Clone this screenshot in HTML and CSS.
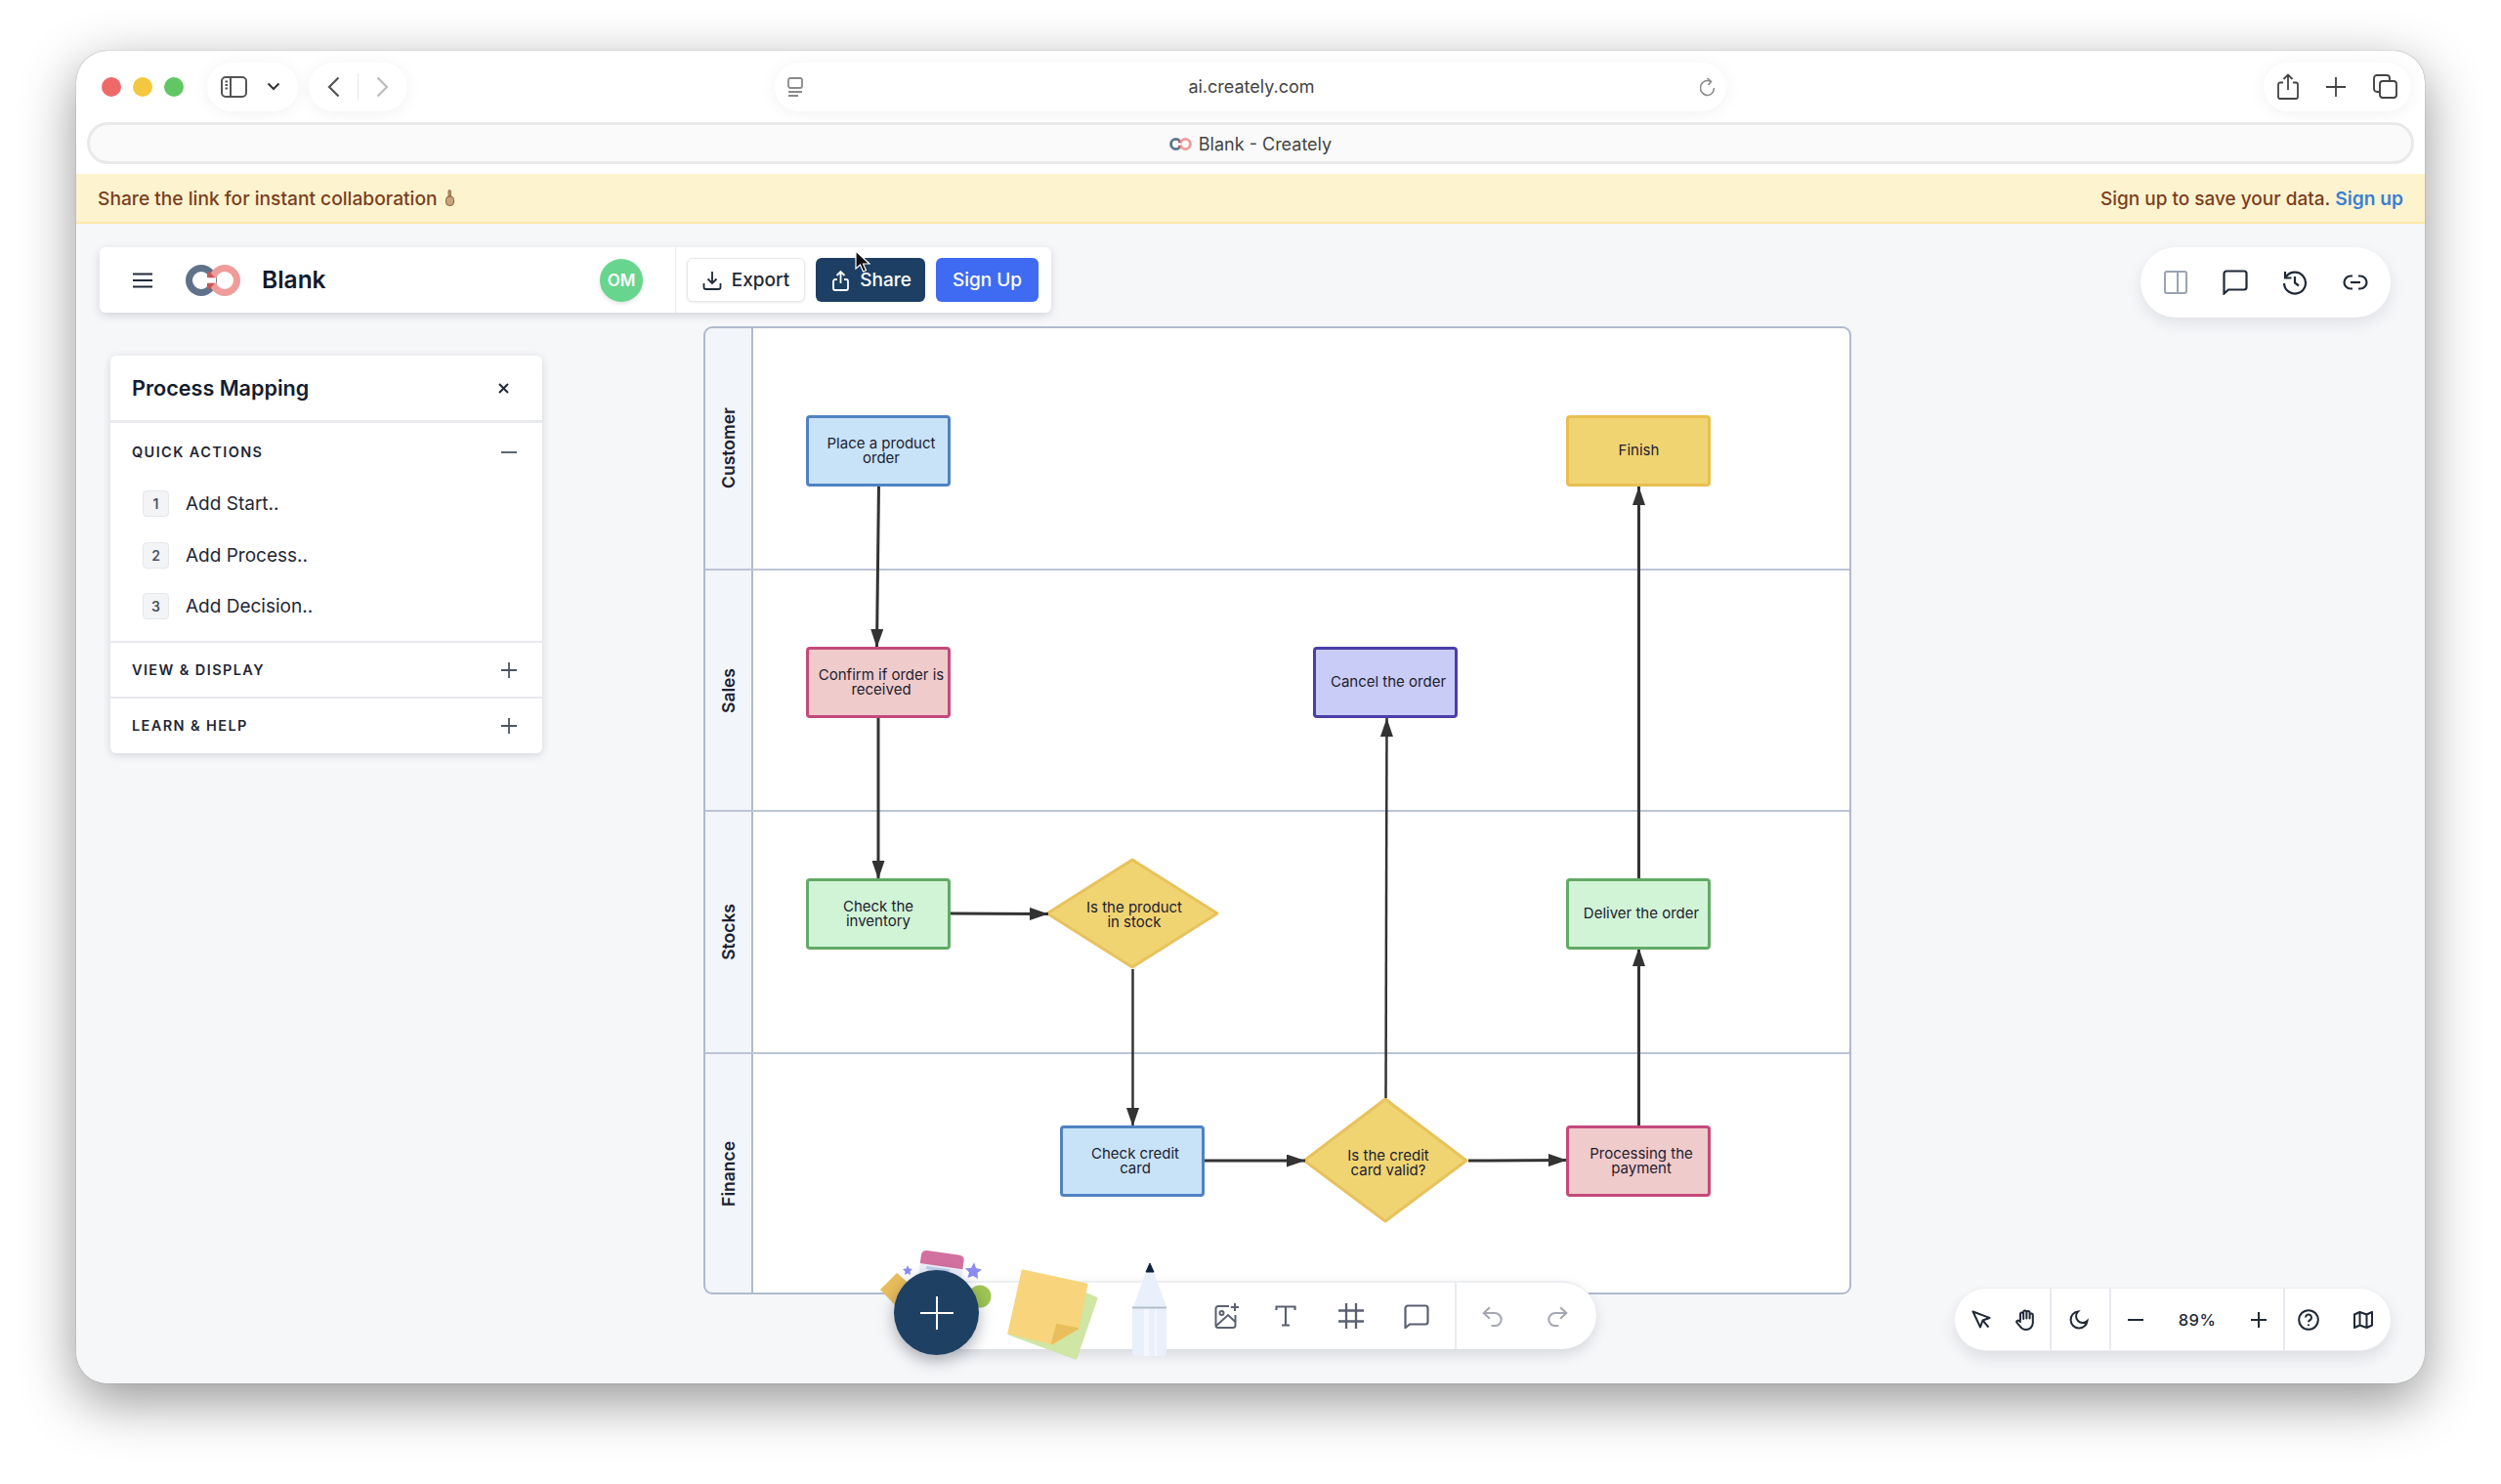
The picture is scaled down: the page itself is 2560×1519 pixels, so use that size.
FILE: index.html
```html
<!DOCTYPE html>
<html lang="en">
  <head>
    <meta charset="UTF-8" />
    <meta name="viewport" content="width=device-width, initial-scale=1.0" />
    <title>Blank - Creately</title>
    <link rel="stylesheet" href="styles.css">
  </head>
  <body>
    <svg class="defs" width="0" height="0">
      <symbol id="logo" viewBox="0 0 56 32">
        <circle cx="16" cy="16" r="12.5" fill="none" stroke="#5f7289" stroke-width="7" />
        <circle cx="40" cy="16" r="12.5" fill="none" stroke="#ef9c9a" stroke-width="7" />
        <path d="M22 6.5a12.5 12.5 0 0 1 6 4.5l2 2.5h-8z M22 25.5a12.5 12.5 0 0 0 6-4.5l2-2.5h-8z" fill="#c9565b" />
        <rect x="21" y="13.4" width="10" height="5.2" fill="#fff" />
      </symbol>
      <marker id="head" markerWidth="19" markerHeight="13" refX="19" refY="6.5" orient="auto" markerUnits="userSpaceOnUse">
        <path d="M0 0L19 6.5L0 13z" fill="#333" />
      </marker>
    </svg>

    <div class="window">
      <div class="browser-bar">
        <div class="lights">
          <span class="light red"></span>
          <span class="light yellow"></span>
          <span class="light green"></span>
        </div>
        <div class="pill side-pill">
          <svg width="27" height="22" viewBox="0 0 27 22" fill="none" stroke="#555" stroke-width="2"><rect x="1" y="1" width="25" height="20" rx="4" /><path d="M10 1v20" /><path d="M4.5 5.5h2.5M4.5 9h2.5M4.5 12.5h2.5" stroke-width="1.8" /></svg>
          <svg width="14" height="9" viewBox="0 0 14 9" fill="none" stroke="#333" stroke-width="2"><path d="M1.5 1.5L7 7l5.5-5.5" /></svg>
        </div>
        <div class="pill nav-pill">
          <svg width="13" height="22" viewBox="0 0 13 22" fill="none" stroke="#555" stroke-width="2.2"><path d="M11.5 1.5L2 11l9.5 9.5" /></svg>
          <span class="nav-sep"></span>
          <svg width="13" height="22" viewBox="0 0 13 22" fill="none" stroke="#bbb" stroke-width="2.2"><path d="M1.5 1.5L11 11l-9.5 9.5" /></svg>
        </div>
        <div class="pill address">
          <svg width="16" height="20" viewBox="0 0 16 20" fill="none" stroke="#8a8a8a" stroke-width="1.8"><rect x="1" y="1" width="14" height="10" rx="2" /><path d="M1 15h14M1 19h10" /></svg>
          <span class="address-text">ai.creately.com</span>
          <svg width="16" height="20" viewBox="0 0 16 20" fill="none" stroke="#8a8a8a" stroke-width="1.6"><path d="M11 4.5A7 7.5 0 1 0 14.5 11" /><path d="M7.5 1l4 3.5-3 3.5" /></svg>
        </div>
        <div class="pill share-pill">
          <svg width="22" height="27" viewBox="0 0 22 27" fill="none" stroke="#444" stroke-width="1.8"><path d="M6 9.5H3a2 2 0 0 0-2 2V24a2 2 0 0 0 2 2h16a2 2 0 0 0 2-2V11.5a2 2 0 0 0-2-2h-3" /><path d="M11 17V1.5M6.5 6L11 1.5 15.5 6" /></svg>
          <svg width="20" height="20" viewBox="0 0 20 20" fill="none" stroke="#444" stroke-width="1.8"><path d="M10 0v20M0 10h20" /></svg>
          <svg width="25" height="25" viewBox="0 0 25 25" fill="none" stroke="#444" stroke-width="1.9"><rect x="7" y="7" width="17" height="17" rx="3" /><path d="M7 18H4a3 3 0 0 1-3-3V4a3 3 0 0 1 3-3h10a3 3 0 0 1 3 3v3" /></svg>
        </div>
      </div>

      <div class="tab-bar">
        <svg class="tab-logo" width="23" height="13"><use href="#logo" /></svg>
        <span>Blank - Creately</span>
      </div>

      <div class="banner">
        <span class="banner-left">
          Share the link for instant collaboration
          <svg width="11" height="18" viewBox="0 0 11 18" fill="#c9a27e" stroke="#7a4a26" stroke-width="0.8"><path d="M4 7V1.8a1.2 1.2 0 0 1 2.4 0V7" /><rect x="1.5" y="7" width="8" height="9.5" rx="3.5" /></svg>
        </span>
        <span>Sign up to save your data. <a class="banner-link">Sign up</a></span>
      </div>

      <div class="canvas">
        <!-- swimlane diagram -->
        <div class="diagram">
          <div class="lane"><div class="lane-head"><span>Customer</span></div></div>
          <div class="lane"><div class="lane-head"><span>Sales</span></div></div>
          <div class="lane"><div class="lane-head"><span>Stocks</span></div></div>
          <div class="lane"><div class="lane-head"><span>Finance</span></div></div>

          <svg class="links" width="1173" height="989" fill="none" stroke="#333" stroke-width="3">
            <polygon class="decision" points="438,545 525,600 438,655 351,600" />
            <polygon class="decision" points="697,790 780,853 697,915 614,853" />
            <path d="M178.5 162L176.5 328" marker-end="url(#head)" />
            <path d="M178 399V565" marker-end="url(#head)" />
            <path d="M252 600L352 600.5" marker-end="url(#head)" />
            <path d="M438.5 657V818" marker-end="url(#head)" stroke-width="2.5" />
            <path d="M512 853L615 853" marker-end="url(#head)" />
            <path d="M782 853L883 852.5" marker-end="url(#head)" />
            <path d="M697.5 789L698.5 400" marker-end="url(#head)" stroke-width="2.5" />
            <path d="M956.5 817V635" marker-end="url(#head)" />
            <path d="M956.5 564V163" marker-end="url(#head)" />
          </svg>

          <div class="node blue node-place">Place a product<br />order</div>
          <div class="node pink node-confirm">Confirm if order is<br />received</div>
          <div class="node green node-inventory">Check the<br />inventory</div>
          <div class="node purple node-cancel">Cancel the order</div>
          <div class="node gold node-finish">Finish</div>
          <div class="node green node-deliver">Deliver the order</div>
          <div class="node pink node-payment">Processing the<br />payment</div>
          <div class="node blue node-credit">Check credit<br />card</div>
          <div class="node-text text-stock">Is the product<br />in stock</div>
          <div class="node-text text-valid">Is the credit<br />card valid?</div>
        </div>

        <!-- top left bar -->
        <div class="top-bar">
          <div class="doc-info">
            <svg class="menu-icon" width="20" height="16" viewBox="0 0 20 16" stroke="#1f2937" stroke-width="2.2"><path d="M0 1.5h20M0 8h20M0 14.5h20" /></svg>
            <svg class="doc-logo" width="56" height="32"><use href="#logo" /></svg>
            <span class="doc-name">Blank</span>
            <span class="avatar">OM</span>
          </div>
          <div class="doc-actions">
            <button class="btn btn-export">
              <svg width="20" height="20" viewBox="0 0 20 20" fill="none" stroke="#1f2937" stroke-width="1.8"><path d="M10 1v12M5.5 8.5L10 13l4.5-4.5" /><path d="M1.5 13v4a2 2 0 0 0 2 2h13a2 2 0 0 0 2-2v-4" /></svg>
              Export
            </button>
            <button class="btn btn-share">
              <svg width="17" height="22" viewBox="0 0 17 22" fill="none" stroke="#fff" stroke-width="1.8"><path d="M8.5 14V2M4.5 6l4-4 4 4" /><path d="M5 10H3a2 2 0 0 0-2 2v7a2 2 0 0 0 2 2h11a2 2 0 0 0 2-2v-7a2 2 0 0 0-2-2h-2" /></svg>
              Share
            </button>
            <button class="btn btn-signup">Sign Up</button>
          </div>
        </div>

        <!-- process panel -->
        <div class="side-panel">
          <div class="panel-head">
            <span class="panel-title">Process Mapping</span>
            <svg width="11" height="11" viewBox="0 0 11 11" stroke="#1f2937" stroke-width="2"><path d="M1 1l9 9M10 1l-9 9" /></svg>
          </div>
          <div class="panel-section open">
            <div class="section-head">
              <span>QUICK ACTIONS</span>
              <svg width="16" height="16" viewBox="0 0 16 16" stroke="#4b5563" stroke-width="1.8"><path d="M0 8h16" /></svg>
            </div>
            <div class="action"><span class="key">1</span>Add Start..</div>
            <div class="action"><span class="key">2</span>Add Process..</div>
            <div class="action"><span class="key">3</span>Add Decision..</div>
          </div>
          <div class="panel-section">
            <div class="section-head">
              <span>VIEW &amp; DISPLAY</span>
              <svg width="16" height="16" viewBox="0 0 16 16" stroke="#4b5563" stroke-width="1.8"><path d="M0 8h16M8 0v16" /></svg>
            </div>
          </div>
          <div class="panel-section">
            <div class="section-head">
              <span>LEARN &amp; HELP</span>
              <svg width="16" height="16" viewBox="0 0 16 16" stroke="#4b5563" stroke-width="1.8"><path d="M0 8h16M8 0v16" /></svg>
            </div>
          </div>
        </div>

        <!-- top right tools -->
        <div class="right-tools">
          <svg width="24" height="24" viewBox="0 0 24 24" fill="none" stroke="#9aa3b2" stroke-width="2"><rect x="1" y="1" width="22" height="22" rx="2" /><path d="M14 1v22" /></svg>
          <svg width="26" height="26" viewBox="0 0 26 26" fill="none" stroke="#1f2937" stroke-width="2.2"><path d="M4 1.5h18a2.5 2.5 0 0 1 2.5 2.5v14a2.5 2.5 0 0 1-2.5 2.5H6L1.5 24.5V4A2.5 2.5 0 0 1 4 1.5z" /></svg>
          <svg width="26" height="26" viewBox="0 0 26 26" fill="none" stroke="#1f2937" stroke-width="2.2"><path d="M3.5 8a11 11 0 1 1-1.5 6" /><path d="M3 2v6.5h6.5" /><path d="M13 7v6.5l4 3" /></svg>
          <svg width="26" height="16" viewBox="0 0 26 16" fill="none" stroke="#1f2937" stroke-width="2.2"><path d="M10 1.5H8a6.5 6.5 0 0 0 0 13h2M16 1.5h2a6.5 6.5 0 0 1 0 13h-2" /><path d="M8 8h10" /></svg>
        </div>

        <!-- bottom creation bar -->
        <div class="create-bar">
          <div class="create-tools">
            <svg width="26" height="26" viewBox="0 0 26 26" fill="none" stroke="#5b6170" stroke-width="2"><path d="M15 3H4a2.5 2.5 0 0 0-2.5 2.5v17A2.5 2.5 0 0 0 4 25h15a2.5 2.5 0 0 0 2.5-2.5V12" /><circle cx="7.5" cy="10" r="2" /><path d="M2 23l12-11 7.5 7" /><path d="M21 0v8M17 4h8" /></svg>
            <svg class="tool-text" width="22" height="22" viewBox="0 0 22 22" fill="none" stroke="#5b6170" stroke-width="2.2"><path d="M1.5 5V1.5h19V5M11 1.5v19M7 20.5h8" /></svg>
            <svg width="26" height="26" viewBox="0 0 26 26" fill="none" stroke="#5b6170" stroke-width="2.3"><path d="M8 0v26M18 0v26M0 7.5h26M0 18.5h26" /></svg>
            <svg width="26" height="25" viewBox="0 0 26 25" fill="none" stroke="#5b6170" stroke-width="2.2"><path d="M4 1.5h18a2.5 2.5 0 0 1 2.5 2.5v14a2.5 2.5 0 0 1-2.5 2.5H6L1.5 24V4A2.5 2.5 0 0 1 4 1.5z" /></svg>
          </div>
          <div class="history-tools">
            <svg width="21" height="21" viewBox="0 0 24 24" fill="none" stroke="#a4a8b1" stroke-width="2.4"><path d="M9 1.5L2 8l7 6.5" /><path d="M2 8h13a7.5 7.5 0 0 1 0 15h-4" /></svg>
            <svg width="21" height="21" viewBox="0 0 24 24" fill="none" stroke="#a4a8b1" stroke-width="2.4"><path d="M15 1.5L22 8l-7 6.5" /><path d="M22 8H9a7.5 7.5 0 0 0 0 15h4" /></svg>
          </div>
        </div>
        <svg class="create-art" width="320" height="130" viewBox="0 0 320 130">
          <polygon points="11,50 28,33 50,52 30,70" fill="#e8bd5c" />
          <g transform="rotate(8 72 30)">
            <rect x="51" y="12" width="44" height="40" rx="4" fill="#eef0fb" />
            <rect x="58" y="28" width="24" height="3" fill="#bcd0ee" />
            <path d="M51 26V17a5 5 0 0 1 5-5h34a5 5 0 0 1 5 5v9z" fill="#d2709f" />
          </g>
          <polygon points="39,25 40.5,28.5 44,29 41.5,31.5 42,35 39,33.3 36,35 36.5,31.5 34,29 37.5,28.5" fill="#8a8cf0" />
          <polygon points="107,22 109,28 115,29.5 110.5,33 111,39 106,36 100.5,38 102,32.5 98,28 104,28" fill="#8a8cf0" />
          <circle cx="113" cy="57" r="11.5" fill="#a0c555" />
          <polygon points="223,55 232,59 211,120 143,95" fill="#cfe6a4" stroke="#cfe6a4" stroke-width="3" stroke-linejoin="round" />
          <polygon points="157,31 222,45 213,88 188,105 143,94" fill="#f8d47c" stroke="#f8d47c" stroke-width="3" stroke-linejoin="round" />
          <polygon points="187,105 192,86 213,90" fill="#e8bf5c" stroke="#e8bf5c" stroke-width="2" stroke-linejoin="round" />
          <path d="M283 32h8l13 36H270z" fill="#e9f0fb" />
          <path d="M283 32h8l-4-9z" fill="#0f2340" stroke="#0f2340" stroke-linejoin="round" />
          <path d="M269 68h35v46a4 4 0 0 1-4 4h-27a4 4 0 0 1-4-4z" fill="#e9f0fb" />
          <path d="M281 69h5v49h-5zM292 69h2v49h-2z" fill="#f4f7fd" />
          <path d="M269 68.5h35" stroke="#b3bdcb" stroke-width="2" />
        </svg>
        <button class="add-btn">
          <svg width="34" height="34" viewBox="0 0 34 34" stroke="#fff" stroke-width="2"><path d="M17 0v34M0 17h34" /></svg>
        </button>

        <!-- bottom right zoom bar -->
        <div class="zoom-bar">
          <div class="zoom-group group-pointer">
            <svg width="20" height="20" viewBox="0 0 20 20" fill="none" stroke="#1f2937" stroke-width="2" stroke-linejoin="round"><path d="M1.5 1.5l17 6.5-7 2.5-2.5 7zM11.5 10.5l6 7" /></svg>
            <svg width="22" height="22" viewBox="0 0 22 22" fill="none" stroke="#1f2937" stroke-width="2" stroke-linecap="round"><path d="M5 11V5a1.6 1.6 0 0 1 3.2 0v5M8.2 9.5V3a1.6 1.6 0 0 1 3.2 0v6.5M11.4 9.5V3.5a1.6 1.6 0 0 1 3.2 0v6M14.6 9.5V6a1.6 1.6 0 0 1 3.2 0v8c0 4-3 7-7 7-3.5 0-5-1.5-6.500-4L1.500 14c-1-1.500.8-3 2.300-2l1.200 1" /></svg>
          </div>
          <div class="zoom-group group-theme">
            <svg width="20" height="20" viewBox="0 0 20 20" fill="none" stroke="#1f2937" stroke-width="2"><path d="M9 1.5A8.5 8.5 0 1 0 18.5 11 6.5 6.5 0 0 1 9 1.5z" /></svg>
          </div>
          <div class="zoom-group group-zoom">
            <svg width="16" height="16" viewBox="0 0 16 16" stroke="#1f2937" stroke-width="2"><path d="M0 8h16" /></svg>
            <span class="zoom-value">89%</span>
            <svg width="16" height="16" viewBox="0 0 16 16" stroke="#1f2937" stroke-width="2"><path d="M0 8h16M8 0v16" /></svg>
          </div>
          <div class="zoom-group group-help">
            <svg width="22" height="22" viewBox="0 0 22 22" fill="none" stroke="#1f2937" stroke-width="2"><circle cx="11" cy="11" r="9.8" /><path d="M8 8.5a3 3 0 1 1 4.5 2.6c-1 .6-1.5 1.100-1.5 2.200" /><path d="M11 15.500v1.500" /></svg>
            <svg width="20" height="18" viewBox="0 0 20 18" fill="none" stroke="#1f2937" stroke-width="2" stroke-linejoin="round"><path d="M1 3.5l5.5-2.5 7 2.500L19 1v13.500L13.500 17l-7-2.500L1 17zM6.500 1v13.500M13.500 3.500V17" /></svg>
          </div>
        </div>

        <!-- mouse pointer from the capture -->
        <svg class="pointer" width="16" height="24" viewBox="0 0 16 24"><path d="M1 1v18l4.5-4 3 7 3-1.300-3-6.700H15z" fill="#111" stroke="#fff" stroke-width="1.2" /></svg>
      </div>
    </div>
  </body>
</html>
```

FILE: styles.css
```css
html,
body {
  margin: 0;
  height: 100%;
  overflow: hidden;
  background: #fff;
}

body {
  padding: 52px 78px 0;
  box-sizing: border-box;
  font-family: Inter, "Liberation Sans", sans-serif;
  color: #1f2937;
}

.defs {
  position: absolute;
}

.window {
  position: relative;
  width: 2404px;
  height: 1364px;
  display: flex;
  flex-direction: column;
  border-radius: 32px;
  background: #fff;
  box-shadow: 0 0 1px rgba(0, 0, 0, 0.5), 0 18px 56px rgba(0, 0, 0, 0.42);
}

/* Browser chrome */
.browser-bar {
  display: flex;
  align-items: center;
  height: 73px;
  padding: 0 14px 0 26px;
  box-sizing: border-box;
  flex-shrink: 0;
}

.lights {
  display: flex;
  gap: 12px;
  margin-right: 24px;
}

.light {
  width: 20px;
  height: 20px;
  border-radius: 50%;
}

.light.red {
  background-color: #ee6a68;
}

.light.yellow {
  background-color: #f3c73f;
}

.light.green {
  background-color: #62c665;
}

.pill {
  display: flex;
  align-items: center;
  height: 50px;
  border-radius: 25px;
  background: #fff;
  box-shadow: 0 2px 18px rgba(0, 0, 0, 0.06);
}

.side-pill {
  width: 93px;
  padding-left: 14px;
  box-sizing: border-box;
  gap: 20px;
  margin-right: 11px;
}

.nav-pill {
  width: 101px;
  justify-content: center;
  gap: 18px;
}

.nav-sep {
  width: 1px;
  height: 28px;
  background-color: #e8e8e8;
}

.address {
  width: 974px;
  margin-left: 376px;
  padding: 0 11px 0 13px;
  box-sizing: border-box;
  justify-content: space-between;
}

.address-text,
.tab-bar {
  font-size: 18px;
  color: #444;
}

.share-pill {
  width: 151px;
  margin-left: auto;
  padding: 0 14px;
  box-sizing: border-box;
  justify-content: space-between;
}

.tab-bar {
  flex-shrink: 0;
  display: flex;
  align-items: center;
  justify-content: center;
  gap: 7px;
  height: 43px;
  margin: 0 11px;
  padding-top: 1px;
  box-sizing: border-box;
  background-color: #fafafa;
  border: 3px solid #e9e9e9;
  border-radius: 22px;
}

.banner {
  flex-shrink: 0;
  display: flex;
  align-items: center;
  justify-content: space-between;
  height: 51px;
  margin-top: 10px;
  padding: 1px 22px 0;
  box-sizing: border-box;
  background-color: #fdf3cf;
  border-bottom: 2px solid #fce9a3;
  font-size: 19px;
  font-weight: 500;
  color: #7a3f1e;
}

.banner-left {
  display: flex;
  align-items: center;
  gap: 7px;
  font-size: 19.2px;
}

.banner-link {
  color: #3a80d2;
  font-size: 19.2px;
  font-weight: 600;
}

/* Canvas */
.canvas {
  position: relative;
  flex: 1;
  border-radius: 0 0 32px 32px;
  background-color: #f6f7f9;
}

.diagram {
  position: absolute;
  left: 643px;
  top: 106px;
  width: 1173px;
  height: 989px;
  display: grid;
  grid-template-rows: 247px 247px 248px 247px;
  box-sizing: border-box;
  background: #fff;
  outline: 2px solid #b0bacd;
  outline-offset: -1px;
  border-radius: 8px;
}

.lane {
  display: flex;
  border-top: 2px solid #bcc4d6;
  box-sizing: border-box;
}

.lane:first-child {
  border-top: none;
}

.lane-head {
  width: 50px;
  display: flex;
  align-items: center;
  justify-content: center;
  box-sizing: border-box;
  background-color: #f2f5f9;
  border-right: 2px solid #b0bacd;
  font-size: 17.5px;
  font-weight: 600;
  color: #1a2233;
}

.lane:first-child .lane-head {
  border-top-left-radius: 8px;
}

.lane:last-child .lane-head {
  border-bottom-left-radius: 8px;
}

.lane-head span {
  writing-mode: vertical-rl;
  transform: rotate(180deg);
}

.links {
  position: absolute;
  left: 0;
  top: 0;
}

.decision {
  fill: #f0d472;
  stroke: #e8c25c;
  stroke-linejoin: round;
}

.node,
.node-text {
  position: absolute;
  display: flex;
  align-items: center;
  justify-content: center;
  text-align: center;
  box-sizing: border-box;
  font-size: 15px;
  line-height: 15px;
  color: #1d2130;
}

.node {
  width: 148px;
  height: 73px;
  padding: 0 0 2px 6px;
  border: 3px solid;
  border-radius: 4px;
}

.node.blue {
  background-color: #c8e3f8;
  border-color: #4f82c0;
}

.node.pink {
  background-color: #f0cbcb;
  border-color: #c44a7a;
}

.node.green {
  background-color: #d1f4d6;
  border-color: #62aa66;
}

.node.purple {
  background-color: #c9ccf6;
  border-color: #4a3fa8;
}

.node.gold {
  background-color: #f0d472;
  border-color: #e8bf50;
  padding-left: 1px;
}

.node-place {
  left: 104px;
  top: 90px;
}

.node-confirm {
  left: 104px;
  top: 327px;
}

.node-inventory {
  left: 104px;
  top: 564px;
  padding-left: 0;
}

.node-cancel {
  left: 623px;
  top: 327px;
}

.node-finish {
  left: 882px;
  top: 90px;
}

.node-deliver {
  left: 882px;
  top: 564px;
}

.node-payment {
  left: 882px;
  top: 817px;
}

.node-credit {
  left: 364px;
  top: 817px;
}

.text-stock {
  left: 360px;
  top: 576px;
  width: 160px;
  height: 50px;
}

.text-valid {
  left: 620px;
  top: 830px;
  width: 160px;
  height: 50px;
}

/* Top bar */
.top-bar {
  position: absolute;
  left: 24px;
  top: 24px;
  width: 974px;
  height: 67px;
  display: flex;
  background: #fff;
  border-radius: 6px;
  box-shadow: 0 3px 10px rgba(30, 40, 60, 0.16);
}

.doc-info {
  width: 590px;
  display: flex;
  align-items: center;
  padding-left: 34px;
  box-sizing: border-box;
  border-right: 1px solid #e8eaee;
}

.doc-logo {
  margin-left: 34px;
}

.doc-name {
  margin: 0 0 2px 22px;
  font-size: 24.5px;
  font-weight: 600;
  color: #111a2e;
}

.avatar {
  margin-left: auto;
  margin-right: 33px;
  width: 44px;
  height: 44px;
  display: flex;
  align-items: center;
  justify-content: center;
  border-radius: 50%;
  background-color: #68d58e;
  color: #fff;
  font-size: 17px;
  font-weight: 600;
  box-shadow: 0 2px 4px rgba(0, 0, 0, 0.12);
}

.doc-actions {
  display: flex;
  align-items: center;
  gap: 11px;
  padding-left: 11px;
}

.btn {
  display: flex;
  align-items: center;
  justify-content: center;
  gap: 10px;
  height: 45px;
  border: none;
  border-radius: 6px;
  font-family: inherit;
  font-size: 19px;
  font-weight: 500;
}

.btn-export {
  width: 121px;
  background: #fff;
  color: #1f2937;
  border: 1px solid #e5e7eb;
  box-shadow: 0 1px 3px rgba(0, 0, 0, 0.08);
}

.btn-share {
  width: 112px;
  padding: 0 0 0 3px;
  gap: 11px;
  background-color: #1c3f63;
  color: #fff;
}

.btn-signup {
  width: 105px;
  background-color: #3f6bf2;
  color: #fff;
}

/* Process panel */
.side-panel {
  position: absolute;
  left: 35px;
  top: 135px;
  width: 442px;
  height: 407px;
  background: #fff;
  border-radius: 6px;
  box-shadow: 0 2px 8px rgba(30, 40, 60, 0.16);
}

.panel-head {
  height: 69px;
  display: flex;
  align-items: center;
  justify-content: space-between;
  padding: 0 34px 0 22px;
  box-sizing: border-box;
  border-bottom: 3px solid #e8eaef;
}

.panel-title {
  font-size: 21.6px;
  font-weight: 600;
  color: #141c2e;
}

.section-head {
  height: 55px;
  display: flex;
  align-items: center;
  justify-content: space-between;
  padding: 0 26px 0 22px;
  box-sizing: border-box;
  font-size: 14.5px;
  font-weight: 600;
  letter-spacing: 1.4px;
  color: #1f2737;
}

.panel-section {
  border-bottom: 2px solid #e8eaef;
}

.panel-section:last-child {
  border-bottom: none;
}

.panel-section.open {
  height: 225px;
  box-sizing: border-box;
}

.open .section-head {
  height: 56px;
  padding-top: 3px;
}

.action {
  height: 52.7px;
  display: flex;
  align-items: center;
  gap: 17px;
  padding-left: 33px;
  font-size: 19px;
  color: #1f2737;
}

.key {
  width: 27px;
  height: 27px;
  display: flex;
  align-items: center;
  justify-content: center;
  box-sizing: border-box;
  background-color: #f3f4f6;
  border: 1px solid #e5e7eb;
  border-radius: 4px;
  font-size: 14px;
  font-weight: 600;
  color: #4b5563;
}

/* Right tools */
.right-tools {
  position: absolute;
  right: 35px;
  top: 24px;
  width: 256px;
  height: 72px;
  display: flex;
  align-items: center;
  justify-content: space-between;
  padding: 0 23px 0 24px;
  box-sizing: border-box;
  background: #fff;
  border-radius: 36px;
  box-shadow: 0 6px 16px rgba(30, 40, 60, 0.1);
}

/* Bottom creation bar */
.create-bar {
  position: absolute;
  left: 902px;
  top: 1082px;
  width: 654px;
  height: 70px;
  display: flex;
  justify-content: flex-end;
  box-sizing: border-box;
  background: #fff;
  border-top: 2px solid #eceef1;
  border-radius: 0 35px 35px 0;
  box-shadow: 0 6px 14px rgba(30, 40, 60, 0.14);
}

.create-tools {
  display: flex;
  align-items: center;
  gap: 41px;
  padding-right: 26px;
}

.tool-text {
  margin: 0 2px 0 -5px;
}

.history-tools {
  width: 145px;
  display: flex;
  align-items: center;
  justify-content: space-between;
  padding: 0 29px 0 26px;
  box-sizing: border-box;
  border-left: 2px solid #e8eaef;
}

.create-art {
  position: absolute;
  left: 812px;
  top: 1041px;
}

.add-btn {
  position: absolute;
  left: 837px;
  top: 1071px;
  width: 87px;
  height: 87px;
  display: flex;
  align-items: center;
  justify-content: center;
  padding: 0;
  border: none;
  border-radius: 50%;
  background-color: #1e4063;
  box-shadow: 0 6px 16px rgba(20, 30, 50, 0.35);
}

/* Zoom bar */
.zoom-bar {
  position: absolute;
  right: 35px;
  top: 1090px;
  width: 446px;
  height: 63px;
  display: flex;
  background: #fff;
  border-radius: 32px;
  box-shadow: 0 0 0 1px #eceef1, 0 8px 16px rgba(30, 40, 60, 0.12);
}

.zoom-group {
  display: flex;
  align-items: center;
  justify-content: space-between;
  box-sizing: border-box;
  border-right: 2px solid #e8eaef;
}

.zoom-group:last-child {
  border-right: none;
}

.group-pointer {
  width: 99px;
  padding: 0 13px 0 17px;
}

.group-theme {
  width: 61px;
  justify-content: center;
  padding-right: 3px;
}

.group-zoom {
  width: 178px;
  padding: 0 17px;
}

.group-help {
  width: 108px;
  padding: 0 18px 0 13px;
}

.zoom-value {
  font-size: 16.5px;
  font-weight: 500;
  letter-spacing: 0.5px;
}

.pointer {
  position: absolute;
  left: 797px;
  top: 27px;
}
```
